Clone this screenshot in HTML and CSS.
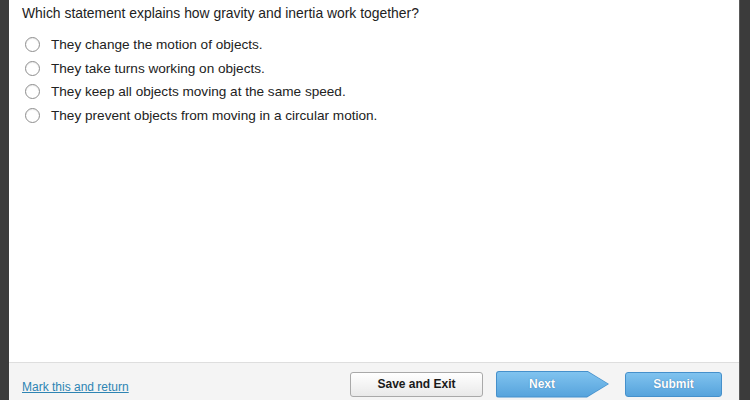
FILE: index.html
```html
<!DOCTYPE html>
<html lang="en">

<head>
    <meta charset="UTF-8">
    <meta name="viewport" content="width=device-width, initial-scale=1.0">
    <title>Question</title>
    <link rel="stylesheet" href="styles.css">
</head>

<body>
    <div class="edge"></div>
    <div class="main">
        <div class="content">
            <p class="question">Which statement explains how gravity and inertia work together?</p>
            <ul class="answers">
                <li><span class="radio"></span>They change the motion of objects.</li>
                <li><span class="radio"></span>They take turns working on objects.</li>
                <li><span class="radio"></span>They keep all objects moving at the same speed.</li>
                <li><span class="radio"></span>They prevent objects from moving in a circular motion.</li>
            </ul>
        </div>
        <div class="footer">
            <a href="#" class="mark">Mark this and return</a>
            <button class="btn save">Save and Exit</button>
            <div class="next-wrap">
                <div class="next">Next</div>
            </div>
            <button class="btn submit">Submit</button>
        </div>
    </div>
    <div class="edge right"></div>
</body>

</html>
```
FILE: styles.css
```css
* {
    margin: 0;
    padding: 0;
}
html, body {
    height: 100%;
}
body {
    display: flex;
    background: #fff;
    font-family: "Liberation Sans", Arial, Helvetica, sans-serif;
    color: #222;
    overflow: hidden;
}
.edge {
    width: 9px;
    background: #3b3b3b;
    flex-shrink: 0;
}
.edge.right {
    width: 10px;
    border-left: 1px solid #5a5a5a;
}
.main {
    flex: 1;
    display: flex;
    flex-direction: column;
    min-width: 0;
}
.content {
    flex: 1;
    padding: 5px 0 0 13px;
    background: #fff;
}
.question {
    font-size: 13.9px;
    line-height: 16px;
    margin-bottom: 12px;
}
.answers {
    list-style: none;
    padding-left: 4px;
}
.answers li {
    display: flex;
    align-items: center;
    height: 23.5px;
    font-size: 13.6px;
}
.radio {
    width: 13px;
    height: 13px;
    border: 1px solid #8e8e8e;
    border-radius: 50%;
    margin-right: 11px;
    margin-left: -1px;
    box-shadow: inset 0 1px 1px rgba(0,0,0,0.08);
}
.footer {
    height: 38px;
    box-sizing: border-box;
    border-top: 1px solid #dedede;
    background: #f4f4f4;
    display: flex;
    align-items: center;
    padding: 5px 17px 0 13px;
}
.mark {
    font-size: 12px;
    color: #2d84b3;
    text-decoration: underline;
    margin-top: 6px;
}
.btn {
    height: 25px;
    border-radius: 3px;
    font-family: inherit;
    font-size: 12px;
    font-weight: bold;
}
.save {
    margin-left: auto;
    width: 133px;
    border: 1px solid #a9a9a9;
    background: linear-gradient(#ffffff, #e9e9e9);
    color: #1a1a1a;
}
.next-wrap {
    width: 113px;
    height: 27px;
    margin-left: 13px;
    background: #4590cb;
    clip-path: polygon(0 0, 91px 0, 113px 50%, 91px 100%, 0 100%);
    border-radius: 3px 0 0 3px;
    padding: 1px;
    box-sizing: border-box;
}
.next {
    height: 100%;
    background: linear-gradient(#80c3ef, #56a3dc);
    clip-path: polygon(0 0, 90px 0, 111px 50%, 90px 100%, 0 100%);
    border-radius: 2px 0 0 2px;
    color: #fff;
    font-size: 12px;
    font-weight: bold;
    display: flex;
    align-items: center;
    padding-left: 32px;
    text-shadow: 0 0 1px rgba(0,40,90,0.5);
}
.submit {
    margin-left: 16px;
    width: 97px;
    border: 1px solid #4590cb;
    background: linear-gradient(#80c3ef, #56a3dc);
    color: #fff;
    text-shadow: 0 0 1px rgba(0,40,90,0.5);
}
```
